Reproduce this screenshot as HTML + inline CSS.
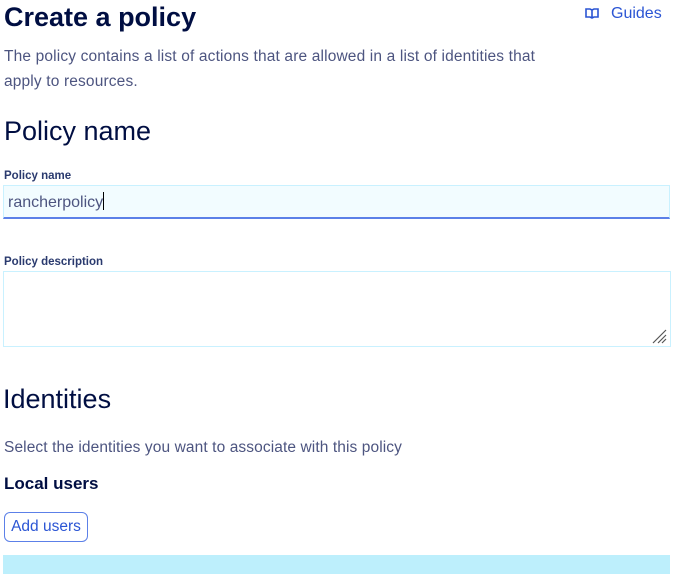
<!DOCTYPE html>
<html><head><style>
body{margin:0;width:700px;height:574px;overflow:hidden;background:#fff;font-family:"Liberation Sans",sans-serif;color:#000e42;position:relative}
.a{position:absolute;white-space:nowrap}
</style></head><body>
<div class="a" style="left:4px;top:2px;font-size:27px;font-weight:bold;color:#000e42">Create a policy</div>
<div class="a" style="left:585px;top:5px;font-size:16px;color:#2b55d4">
<svg width="14" height="12" viewBox="0 0 14 12" style="vertical-align:-1px;margin-right:12px"><path d="M1 2h4l2 1 2-1h4v8H9l-2 1-2-1H1z M7 3v8" fill="none" stroke="#2b55d4" stroke-width="1.6"/></svg>Guides</div>
<div class="a" style="left:4px;top:44px;font-size:15.5px;line-height:25px;color:#4d5580;letter-spacing:0.15px">The policy contains a list of actions that are allowed in a list of identities that<br>apply to resources.</div>
<div class="a" style="left:4px;top:116px;font-size:27px;color:#000e42">Policy name</div>
<div class="a" style="left:4px;top:170px;font-size:11.5px;font-weight:bold;color:#2a3a6e">Policy name</div>
<div class="a" style="left:3px;top:185px;width:665px;height:31px;background:#f2fcff;border:1px solid #c9f1ff;border-bottom:2px solid #5c80e8"></div>
<div class="a" style="left:8px;top:192px;font-size:16px;color:#4d5580">rancherpolicy<span style="display:inline-block;width:1px;height:18px;background:#000;vertical-align:-3px"></span></div>
<div class="a" style="left:4px;top:256px;font-size:11.5px;font-weight:bold;color:#2a3a6e">Policy description</div>
<div class="a" style="left:3px;top:271px;width:666px;height:74px;border:1px solid #c9f1ff;background:#fff"></div>
<svg class="a" style="left:651px;top:328px" width="16" height="16" viewBox="0 0 16 16"><path d="M2 15L15 2M7 15L15 7M11 15L15 11" stroke="#555" stroke-width="1.2"/></svg>
<div class="a" style="left:3px;top:384px;font-size:27px;color:#000e42">Identities</div>
<div class="a" style="left:4px;top:439px;font-size:15.5px;color:#4d5580;letter-spacing:0.1px">Select the identities you want to associate with this policy</div>
<div class="a" style="left:4px;top:474px;font-size:17px;font-weight:bold;color:#000e42">Local users</div>
<div class="a" style="left:4px;top:512px;width:82px;height:28px;border:1px solid #5c80e8;border-radius:6px;font-size:15.5px;color:#2b55d4;line-height:28px;text-align:center">Add users</div>
<div class="a" style="left:3px;top:555px;width:667px;height:19px;background:#bdeffc"></div>
</body></html>
